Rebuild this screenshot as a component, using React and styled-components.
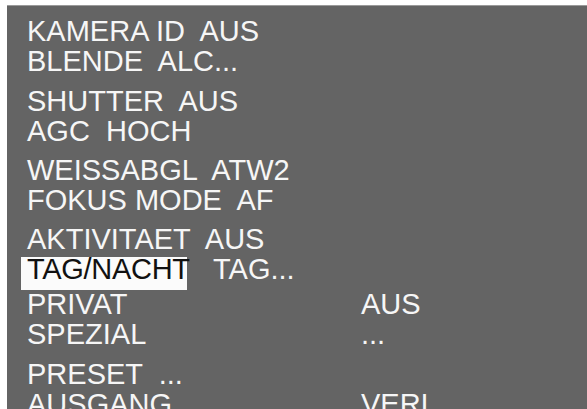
import React from 'react'
import styled, { createGlobalStyle } from 'styled-components'

const GlobalStyle = createGlobalStyle`
  html, body {
    margin: 0;
    padding: 0;
    background: #ffffff;
    overflow: hidden;
  }
`

const Page = styled.div`
  padding: 5px 0 0 7px;
  height: 409px;
  box-sizing: border-box;
`

const Screen = styled.div`
  background: #646464;
  border-top: 1px solid #9a9a9a;
  height: 420px;
  padding: 10px 0 0 20px;
  box-sizing: border-box;
  font-family: "Liberation Sans", Arial, sans-serif;
  font-size: 29px;
  color: #f6f6f6;
`

const Group = styled.div`
  display: flex;
  flex-direction: column;
  margin-top: ${props => props.gap || 0}px;
`

const Line = styled.div`
  display: grid;
  grid-template-columns: ${props => (props.column ? '334px auto' : 'auto')};
  line-height: 30px;
  height: 30px;
  white-space: pre;
`

const Highlight = styled.span`
  display: inline-block;
  width: 166px;
  box-sizing: border-box;
  margin-left: -6px;
  padding: 0 0 6px 6px;
  margin-bottom: -6px;
  line-height: 30px;
  letter-spacing: -0.3px;
  color: #111111;
  background: linear-gradient(transparent 3px, #fbfbfb 3px);
`

const Value = styled.span`
  margin-left: ${props => props.offset || 0}px;
`

const groups = [
  {
    gap: 0,
    lines: [
      { label: 'KAMERA ID', value: '  AUS' },
      { label: 'BLENDE', value: '  ALC...' },
    ],
  },
  {
    gap: 10,
    lines: [
      { label: 'SHUTTER', value: '  AUS' },
      { label: 'AGC', value: '  HOCH' },
    ],
  },
  {
    gap: 9,
    lines: [
      { label: 'WEISSABGL', value: '  ATW2' },
      { label: 'FOKUS MODE', value: '  AF' },
    ],
  },
  {
    gap: 9,
    lines: [
      { label: 'AKTIVITAET', value: '  AUS' },
      { label: 'TAG/NACHT', value: 'TAG...', selected: true },
    ],
  },
  {
    gap: 5,
    lines: [
      { label: 'PRIVAT', value: 'AUS', column: true },
      { label: 'SPEZIAL', value: '...', column: true },
    ],
  },
  {
    gap: 10,
    lines: [
      { label: 'PRESET', value: '  ...' },
      { label: 'AUSGANG', value: 'VERL', column: true },
    ],
  },
]

const App = () => {
  return (
    <Page>
      <GlobalStyle />
      <Screen>
        {groups.map((group, i) => (
          <Group key={i} gap={group.gap}>
            {group.lines.map(line => (
              <Line key={line.label} column={line.column}>
                {line.selected ? (
                  <span>
                    <Highlight>{line.label}</Highlight>
                    <Value offset={26}>{line.value}</Value>
                  </span>
                ) : line.column ? (
                  <>
                    <span>{line.label}</span>
                    <span>{line.value}</span>
                  </>
                ) : (
                  <span>{line.label}{line.value}</span>
                )}
              </Line>
            ))}
          </Group>
        ))}
      </Screen>
    </Page>
  )
}

export default App
